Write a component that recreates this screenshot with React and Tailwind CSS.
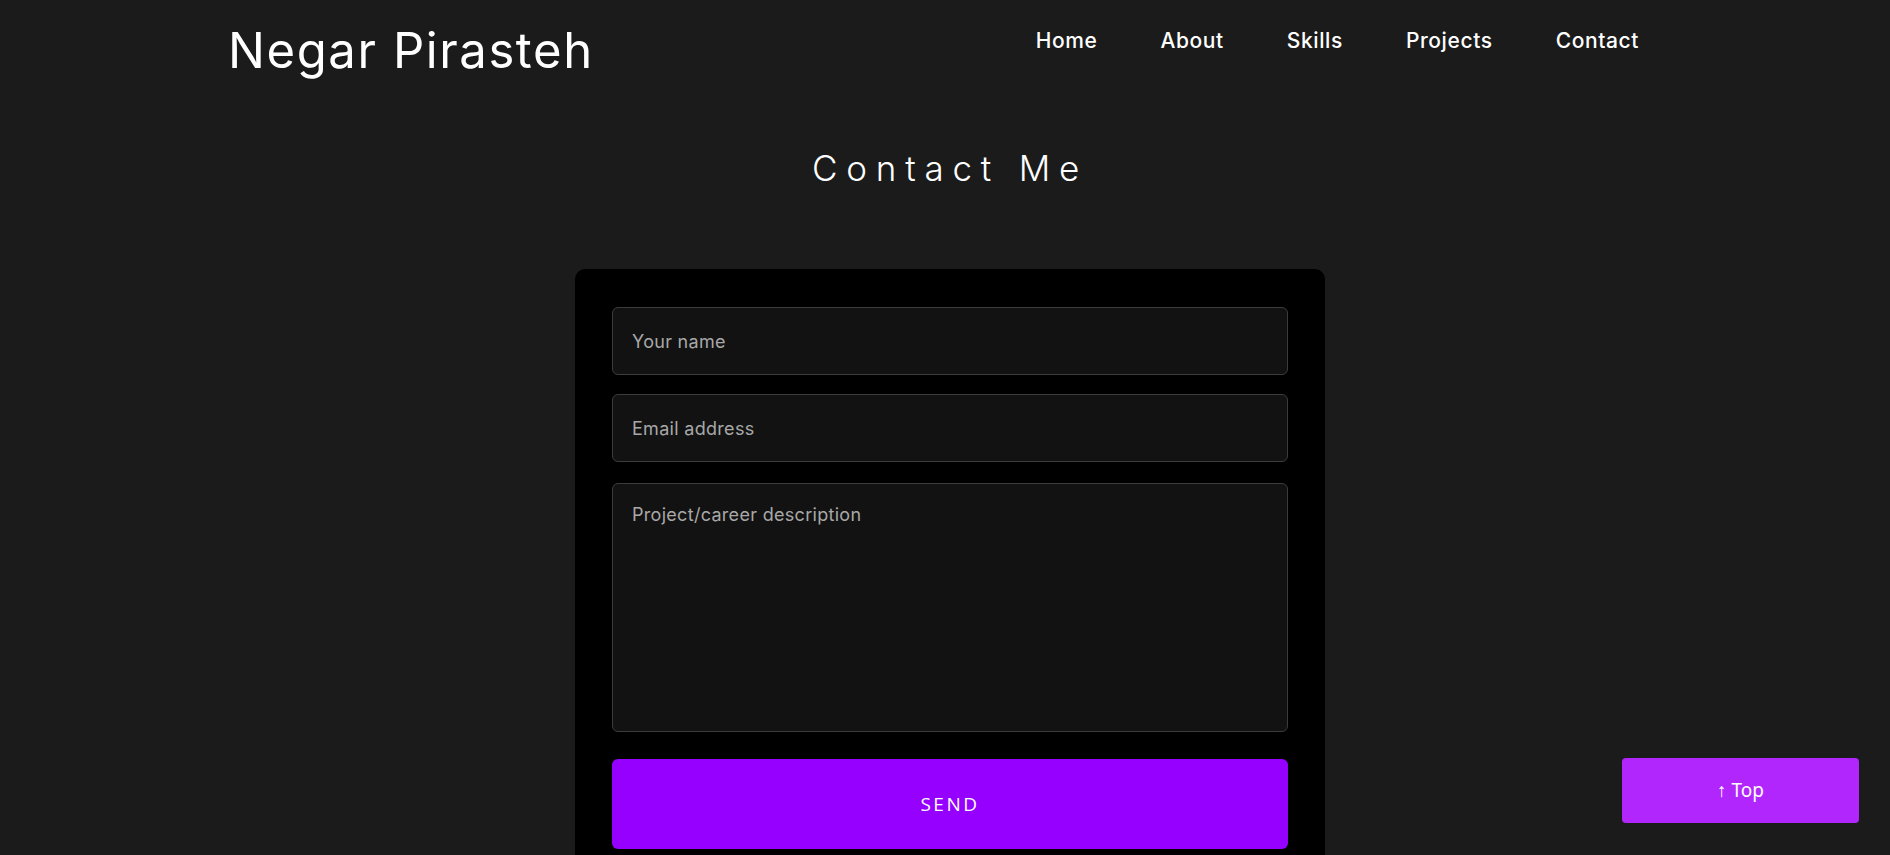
export default function App() {
  const font = { fontFamily: "Inter, 'Noto Sans', sans-serif" };
  return (
    <div className="min-h-[855px] bg-[#1b1b1b] text-white" style={font}>
      <header className="flex items-start justify-between pl-[228px] pr-[251px] pt-[26px]">
        <h1 className="text-[49px] leading-none font-normal tracking-[1.6px]">Negar Pirasteh</h1>
        <nav className="mt-[4px] flex gap-[63px] text-[21px] leading-none font-medium tracking-[0.6px]">
          <a>Home</a>
          <a>About</a>
          <a>Skills</a>
          <a>Projects</a>
          <a>Contact</a>
        </nav>
      </header>
      <main className="flex flex-col items-center pl-[10px] pb-[40px]">
        <h2 className="mt-[76px] text-[35px] leading-none font-light tracking-[0.25em]">Contact Me</h2>
        <form className="mt-[83px] w-[750px] rounded-[10px] bg-black px-[37px] pt-[38px] pb-[38px] flex flex-col">
          <input
            className="h-[68px] w-full rounded-[6px] border border-[#3c3c3c] bg-[#121212] px-[19px] text-[18px] tracking-[0.3px] text-white placeholder:text-[#a8a8a8] outline-none"
            placeholder="Your name"
          />
          <input
            className="mt-[19px] h-[68px] w-full rounded-[6px] border border-[#3c3c3c] bg-[#121212] px-[19px] text-[18px] tracking-[0.3px] text-white placeholder:text-[#a8a8a8] outline-none"
            placeholder="Email address"
          />
          <textarea
            className="mt-[21px] h-[249px] w-full resize-none rounded-[6px] border border-[#3c3c3c] bg-[#121212] px-[19px] pt-[19px] text-[18px] tracking-[0.3px] leading-[1.3] text-white placeholder:text-[#a8a8a8] outline-none"
            placeholder="Project/career description"
          />
          <button
            type="button"
            className="mt-[27px] h-[90px] w-full rounded-[6px] bg-[#9500ff] text-[19px] tracking-[2.5px] text-white"
            style={{ fontFamily: "'Open Sans', 'Noto Sans', sans-serif" }}
          >
            SEND
          </button>
        </form>
      </main>
      <button
        type="button"
        className="fixed right-[31px] bottom-[32px] h-[65px] w-[237px] rounded-[4px] bg-[#b226fe] text-[19px] text-white"
        style={{ fontFamily: "'Noto Sans', 'Open Sans', sans-serif" }}
      >
        ↑ Top
      </button>
    </div>
  );
}
